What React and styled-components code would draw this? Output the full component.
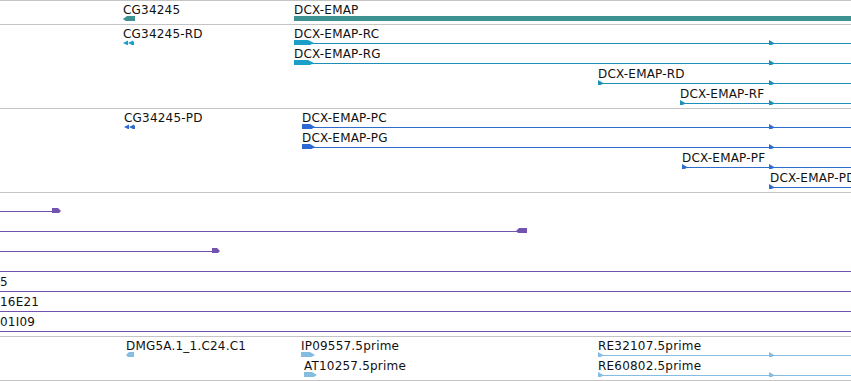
import React from "react";
import styled, { createGlobalStyle } from "styled-components";

const W = 851;

const GlobalStyle = createGlobalStyle`
  html, body { margin: 0; padding: 0; background: #ffffff; overflow: hidden; }
  #root { width: ${W}px; }
`;

const Page = styled.div`
  width: ${W}px;
  height: 381px;
  overflow: hidden;
  background: #ffffff;
  display: flex;
  flex-direction: column;
`;

const Track = styled.section`
  display: flex;
  flex-direction: column;
  padding-bottom: 3px;
  border-top: ${(p) => (p.$first ? "1px solid #c4c4c4" : "none")};
  border-bottom: 1px solid #c4c4c4;
`;

const Row = styled.div`
  position: relative;
  height: 20px;
  flex: none;
  overflow: hidden;
`;

const GlyphLayer = styled.svg`
  position: absolute;
  left: 0;
  top: 0;
  width: ${W}px;
  height: 20px;
  overflow: visible;
`;

const Label = styled.span`
  position: absolute;
  top: 2px;
  left: ${(p) => p.$x}px;
  font-family: "DejaVu Sans", "Liberation Sans", sans-serif;
  font-size: 12px;
  line-height: 14px;
  letter-spacing: 0.2px;
  color: #111;
  white-space: nowrap;
`;

const TEAL = { box: "#3f9292", line: "#3f9292" };
const CYAN = { box: "#1aa0c8", line: "#1b8fb8" };
const BLUE = { box: "#2c69d2", line: "#2e6ccd" };
const PURPLE = { box: "#7353b0", line: "#7353b0" };
const LIGHT = { box: "#85bce2", line: "#85bce2" };

const tracks = [
  {
    color: TEAL,
    rows: [
      [
        { label: "CG34245", lx: 123, shapes: [{ t: "larrow", tip: 123, a: 127, b: 135 }] },
        { label: "DCX-EMAP", lx: 294, shapes: [{ t: "bar", a: 294, b: W }] },
      ],
    ],
  },
  {
    color: CYAN,
    rows: [
      [
        { label: "CG34245-RD", lx: 123, shapes: [{ t: "dleft", x: 123 }] },
        {
          label: "DCX-EMAP-RC",
          lx: 294,
          shapes: [
            { t: "line", a: 300, b: W },
            { t: "rarrow", a: 294, b: 308, tip: 314 },
            { t: "marker", x: 769 },
          ],
        },
      ],
      [
        {
          label: "DCX-EMAP-RG",
          lx: 294,
          shapes: [
            { t: "line", a: 300, b: W },
            { t: "rarrow", a: 294, b: 308, tip: 314 },
            { t: "marker", x: 769 },
          ],
        },
      ],
      [
        {
          label: "DCX-EMAP-RD",
          lx: 598,
          shapes: [
            { t: "line", a: 598, b: W },
            { t: "marker", x: 598 },
            { t: "marker", x: 769 },
          ],
        },
      ],
      [
        {
          label: "DCX-EMAP-RF",
          lx: 680,
          shapes: [
            { t: "line", a: 680, b: W },
            { t: "marker", x: 680 },
            { t: "marker", x: 769 },
          ],
        },
      ],
    ],
  },
  {
    color: BLUE,
    rows: [
      [
        { label: "CG34245-PD", lx: 124, shapes: [{ t: "dleft", x: 124 }] },
        {
          label: "DCX-EMAP-PC",
          lx: 302,
          shapes: [
            { t: "line", a: 306, b: W },
            { t: "rarrow", a: 302, b: 310, tip: 315 },
            { t: "marker", x: 769 },
          ],
        },
      ],
      [
        {
          label: "DCX-EMAP-PG",
          lx: 302,
          shapes: [
            { t: "line", a: 306, b: W },
            { t: "rarrow", a: 302, b: 310, tip: 315 },
            { t: "marker", x: 769 },
          ],
        },
      ],
      [
        {
          label: "DCX-EMAP-PF",
          lx: 682,
          shapes: [
            { t: "line", a: 682, b: W },
            { t: "marker", x: 682 },
            { t: "marker", x: 769 },
          ],
        },
      ],
      [
        {
          label: "DCX-EMAP-PD",
          lx: 770,
          shapes: [
            { t: "line", a: 770, b: W },
            { t: "marker", x: 769 },
          ],
        },
      ],
    ],
  },
  {
    color: PURPLE,
    rows: [
      [{ shapes: [{ t: "line", a: 0, b: 54 }, { t: "rarrow", a: 52, b: 58, tip: 61 }] }],
      [{ shapes: [{ t: "line", a: 0, b: 518 }, { t: "larrow", tip: 516, a: 519, b: 527 }] }],
      [{ shapes: [{ t: "line", a: 0, b: 214 }, { t: "rarrow", a: 212, b: 217, tip: 220 }] }],
      [{ shapes: [{ t: "line", a: 0, b: W }] }],
      [{ label: "5", lx: 0, shapes: [{ t: "line", a: 0, b: W }] }],
      [{ label: "16E21", lx: 0, shapes: [{ t: "line", a: 0, b: W }] }],
      [{ label: "01I09", lx: 0, shapes: [{ t: "line", a: 0, b: W }] }],
    ],
  },
  {
    color: LIGHT,
    rows: [
      [
        { label: "DMG5A.1_1.C24.C1", lx: 126, shapes: [{ t: "larrow", tip: 126, a: 129, b: 134 }] },
        { label: "IP09557.5prime", lx: 301, shapes: [{ t: "rarrow", a: 301, b: 310, tip: 315 }] },
        {
          label: "RE32107.5prime",
          lx: 598,
          shapes: [
            { t: "line", a: 598, b: W },
            { t: "marker", x: 598 },
            { t: "marker", x: 769 },
          ],
        },
      ],
      [
        { label: "AT10257.5prime", lx: 304, shapes: [{ t: "rarrow", a: 304, b: 312, tip: 317 }] },
        {
          label: "RE60802.5prime",
          lx: 598,
          shapes: [
            { t: "line", a: 598, b: W },
            { t: "marker", x: 598 },
            { t: "marker", x: 769 },
          ],
        },
      ],
    ],
  },
];

function Shape({ s, color }) {
  const T = 15;
  const B = 21;
  const M = 18;
  switch (s.t) {
    case "bar":
      return <rect x={s.a} y={T} width={s.b - s.a} height={B - T} fill={color.box} shapeRendering="crispEdges" />;
    case "line":
      return <rect x={s.a} y={M} width={s.b - s.a} height={1} fill={color.line} shapeRendering="crispEdges" />;
    case "rarrow":
      return (
        <polygon
          points={`${s.a},${T} ${s.b},${T} ${s.tip},${M} ${s.b},${B} ${s.a},${B}`}
          fill={color.box}
        />
      );
    case "larrow":
      return (
        <polygon
          points={`${s.tip},${M} ${s.a},${T} ${s.b},${T} ${s.b},${B} ${s.a},${B}`}
          fill={color.box}
        />
      );
    case "dleft":
      return (
        <g fill={color.box}>
          <polygon points={`${s.x},${M} ${s.x + 5},${T + 0.5} ${s.x + 5},${B - 0.5}`} />
          <polygon points={`${s.x + 5},${M} ${s.x + 10},${T + 0.5} ${s.x + 10},${B - 0.5}`} />
          <rect x={s.x + 9} y={T + 1.5} width={2} height={4} />
        </g>
      );
    case "marker":
      return <polygon points={`${s.x},${T} ${s.x + 6},${M + 0.5} ${s.x},${B}`} fill={color.line} />;
    default:
      return null;
  }
}

function FeatureRow({ features, color }) {
  return (
    <Row>
      <GlyphLayer viewBox={`0 0 ${W} 20`}>
        {features.map((f, i) =>
          f.shapes.map((s, j) => <Shape key={`${i}-${j}`} s={s} color={color} />)
        )}
      </GlyphLayer>
      {features
        .filter((f) => f.label)
        .map((f) => (
          <Label key={f.label} $x={f.lx}>
            {f.label}
          </Label>
        ))}
    </Row>
  );
}

export default function App() {
  return (
    <>
      <GlobalStyle />
      <Page>
        {tracks.map((tr, i) => (
          <Track key={i} $first={i === 0}>
            {tr.rows.map((r, j) => (
              <FeatureRow key={j} features={r} color={tr.color} />
            ))}
          </Track>
        ))}
      </Page>
    </>
  );
}
